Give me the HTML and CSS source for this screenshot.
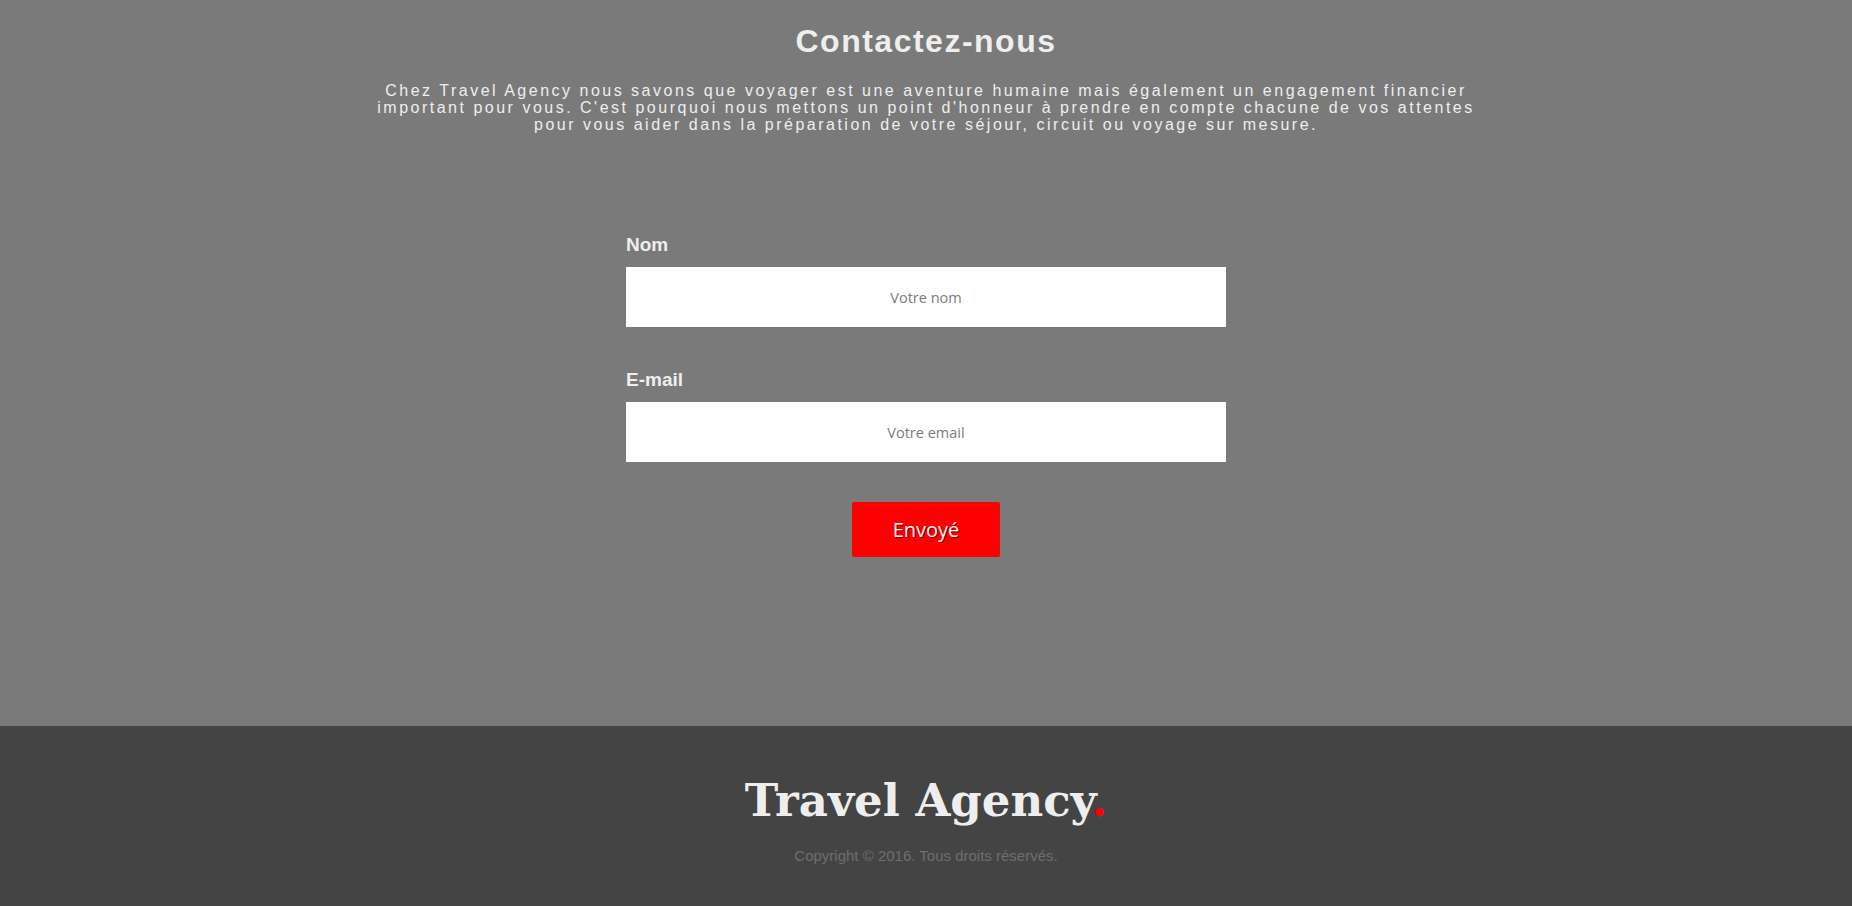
FILE: index.html
```html
<!DOCTYPE html>
<html lang="fr">
<head>
<meta charset="utf-8">
<title>Contactez-nous</title>
<link rel="stylesheet" href="styles.css">
</head>
<body>
<main class="contact">
  <h1 class="contact-title">Contactez-nous</h1>
  <p class="contact-intro">Chez Travel Agency nous savons que voyager est une aventure humaine mais également un engagement financier important pour vous. C'est pourquoi nous mettons un point d'honneur à prendre en compte chacune de vos attentes pour vous aider dans la préparation de votre séjour, circuit ou voyage sur mesure.</p>
  <form class="contact-form">
    <div class="field">
      <label class="field-label" for="nom">Nom</label>
      <input class="field-input" id="nom" type="text" placeholder="Votre nom">
    </div>
    <div class="field">
      <label class="field-label" for="email">E-mail</label>
      <input class="field-input" id="email" type="email" placeholder="Votre email">
    </div>
    <button class="submit" type="button">Envoyé</button>
  </form>
</main>
<footer class="footer">
  <div class="footer-brand">Travel Agency<span class="dot">.</span></div>
  <p class="footer-copy">Copyright © 2016. Tous droits réservés.</p>
</footer>
</body>
</html>
```

FILE: styles.css
```css
* { box-sizing: border-box; }

html, body {
  margin: 0;
  padding: 0;
}

body {
  background: #7a7a7a;
  font-family: "Liberation Sans", Arial, sans-serif;
  color: #eeeeee;
}

.contact {
  height: 726px;
  padding-top: 23px;
}

.contact-title {
  margin: 0;
  font-size: 32px;
  font-weight: bold;
  letter-spacing: 1.5px;
  text-align: center;
  line-height: 37px;
}

.contact-intro {
  width: 60%;
  margin: 22px auto 0;
  font-size: 16px;
  line-height: 17px;
  letter-spacing: 2.5px;
  text-align: center;
}

.contact-form {
  width: 600px;
  margin: 101px auto 0;
}

.field {
  margin-bottom: 42px;
}

.field + .field {
  margin-bottom: 40px;
}

.field-label {
  display: block;
  font-size: 19px;
  font-weight: bold;
  line-height: 22px;
  margin-bottom: 11px;
}

.field-input {
  display: block;
  width: 600px;
  height: 60px;
  border: none;
  background: #ffffff;
  text-align: center;
  font-family: "Open Sans", "Noto Sans", sans-serif;
  font-size: 14.5px;
  color: #333;
  outline: none;
}

.field-input::placeholder {
  color: #7b7b7b;
}

.submit {
  display: block;
  margin: 0 auto;
  width: 148px;
  height: 55px;
  background: #ff0000;
  border: none;
  border-radius: 2px;
  color: #f4f4f4;
  font-family: "Open Sans", "Noto Sans", sans-serif;
  font-size: 20px;
  text-shadow: 1px 1px 0 #8a0000;
  cursor: pointer;
}

.footer {
  height: 180px;
  background: #444444;
  padding-top: 49px;
  text-align: center;
}

.footer-brand {
  font-family: "DejaVu Serif", serif;
  font-weight: bold;
  font-size: 45px;
  line-height: 52px;
  color: #eeeeee;
}

.footer-brand .dot {
  color: #ff0000;
}

.footer-copy {
  margin: 20px 0 0;
  font-size: 15px;
  line-height: 17px;
  color: #6e6e6e;
}
```
